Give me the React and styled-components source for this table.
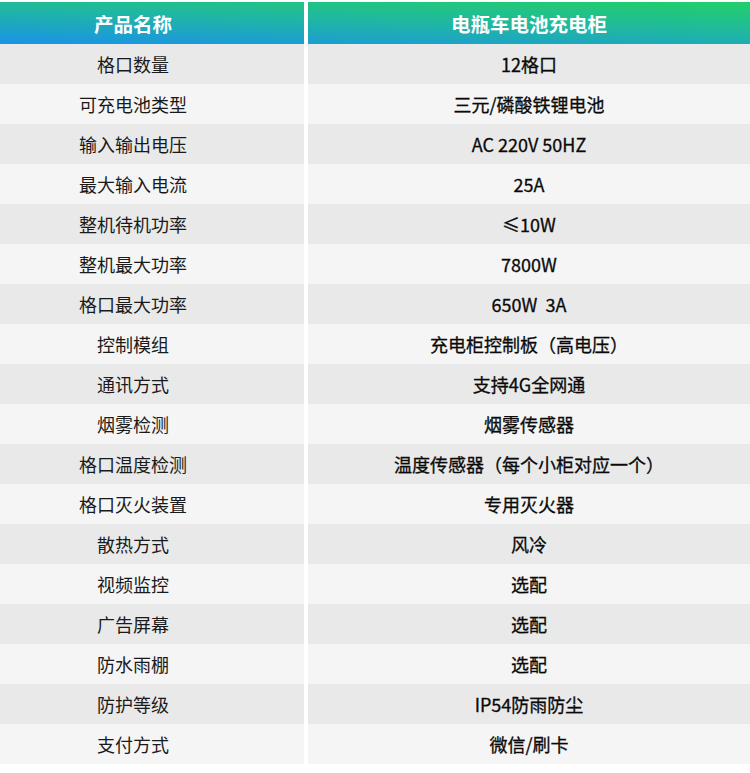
import styled, { createGlobalStyle } from "styled-components";

const GlobalStyle = createGlobalStyle`
  html, body {
    margin: 0;
    padding: 0;
    background: #fff;
  }
  body {
    font-family: "Noto Sans CJK SC", "Noto Sans", sans-serif;
  }
`;

const rows = [
  ["格口数量", "12格口"],
  ["可充电池类型", "三元/磷酸铁锂电池"],
  ["输入输出电压", "AC 220V 50HZ"],
  ["最大输入电流", "25A"],
  ["整机待机功率", "≤10W"],
  ["整机最大功率", "7800W"],
  ["格口最大功率", "650W  3A"],
  ["控制模组", "充电柜控制板（高电压）"],
  ["通讯方式", "支持4G全网通"],
  ["烟雾检测", "烟雾传感器"],
  ["格口温度检测", "温度传感器（每个小柜对应一个）"],
  ["格口灭火装置", "专用灭火器"],
  ["散热方式", "风冷"],
  ["视频监控", "选配"],
  ["广告屏幕", "选配"],
  ["防水雨棚", "选配"],
  ["防护等级", "IP54防雨防尘"],
  ["支付方式", "微信/刷卡"],
];

const Table = styled.div`
  width: 750px;
  padding-top: 2px;
  display: flex;
  flex-direction: column;
`;

const Head = styled.div`
  display: grid;
  grid-template-columns: 304px 1fr;
  height: 42px;
  background: linear-gradient(182deg, #22cf68 0%, #20b8a0 45%, #1a93e6 100%);
`;

const HeadCell = styled.div`
  display: flex;
  align-items: center;
  justify-content: center;
  color: #fff;
  font-size: 19.5px;
  font-weight: 700;
  padding-right: ${p => (p.$left ? "38px" : "0")};
  border-left: ${p => (p.$left ? "none" : "4px solid #fff")};
`;

const Row = styled.div`
  display: grid;
  grid-template-columns: 304px 1fr;
  column-gap: 4px;
  height: 40px;
`;

const Cell = styled.div`
  display: flex;
  align-items: center;
  justify-content: center;
  white-space: pre;
  color: ${p => (p.$left ? "#1a1a1a" : "#0a0a0a")};
  font-size: 18px;
  font-weight: 400;
  -webkit-text-stroke: ${p => (p.$left ? "0" : "0.3px #0a0a0a")};
  background: ${p => (p.$odd ? "#e9e9e9" : "#f5f5f5")};
  padding-right: ${p => (p.$left ? "38px" : "0")};
`;

export default function App() {
  return (
    <>
      <GlobalStyle />
      <Table>
        <Head>
          <HeadCell $left>产品名称</HeadCell>
          <HeadCell>电瓶车电池充电柜</HeadCell>
        </Head>
        {rows.map(([name, value], i) => (
          <Row key={name}>
            <Cell $left $odd={i % 2 === 0}>{name}</Cell>
            <Cell $odd={i % 2 === 0}>{value}</Cell>
          </Row>
        ))}
      </Table>
    </>
  );
}
